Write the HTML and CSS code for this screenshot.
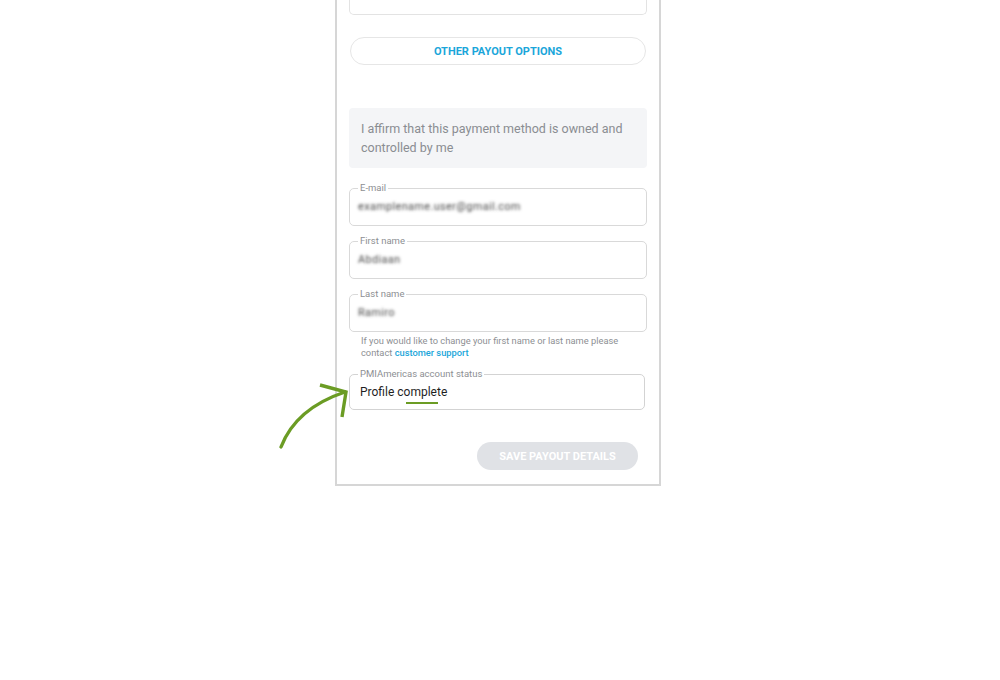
FILE: index.html
```html
<!DOCTYPE html>
<html lang="en">
<head>
    <meta charset="UTF-8">
    <meta name="viewport" content="width=device-width, initial-scale=1.0">
    <title>Payout Details</title>
    <link rel="stylesheet" href="styles.css">
</head>
<body>
    <div class="page">
        <div class="card">
            <div class="field-cut"></div>

            <button class="btn-outline">OTHER PAYOUT OPTIONS</button>

            <div class="affirm">I affirm that this payment method is owned and controlled by me</div>

            <fieldset class="field">
                <legend>E-mail</legend>
                <div class="value blurred">examplename.user@gmail.com</div>
            </fieldset>

            <fieldset class="field">
                <legend>First name</legend>
                <div class="value blurred">Abdiaan</div>
            </fieldset>

            <fieldset class="field">
                <legend>Last name</legend>
                <div class="value blurred">Ramiro</div>
            </fieldset>

            <p class="helper">If you would like to change your first name or last name please contact <a href="#">customer support</a></p>

            <fieldset class="field status">
                <legend>PMIAmericas account status</legend>
                <div class="value">Profile <span class="mark">complete</span></div>
            </fieldset>

            <div class="actions">
                <button class="btn-save" disabled>SAVE PAYOUT DETAILS</button>
            </div>

            <!-- annotation arrow -->
            <svg class="arrow" width="80" height="70" viewBox="275 382 80 70">
                <path d="M279,447 C289,421 310,403 343,392" fill="none" stroke="#6b9c24" stroke-width="3.4" stroke-linecap="round"/>
                <path d="M318,385 L344,392 L340,417" fill="none" stroke="#6b9c24" stroke-width="3.4" stroke-linejoin="miter"/>
            </svg>
        </div>
    </div>
</body>
</html>
```

FILE: styles.css
```css
body {
    margin: 0;
    background: #fff;
    font-family: Roboto, "Liberation Sans", Arial, sans-serif;
}
.page {
    width: 1000px;
    height: 680px;
    padding-left: 335px;
    box-sizing: border-box;
}
.card {
    position: relative;
    width: 326px;
    box-sizing: border-box;
    border: 2px solid #d6d6d6;
    border-top: none;
    padding: 0 12px 14px;
}
.field-cut {
    height: 14px;
    border: 1px solid #e3e3e3;
    border-top: none;
    border-radius: 0 0 5px 5px;
}
.btn-outline {
    display: block;
    width: 296px;
    height: 28px;
    margin: 22px 0 0 1px;
    background: #fff;
    border: 1.5px solid #e6e6e6;
    border-radius: 14px;
    color: #1ba6da;
    font-family: inherit;
    font-size: 11px;
    font-weight: 700;
    cursor: pointer;
}
.affirm {
    margin-top: 43px;
    background: #f4f5f7;
    border-radius: 4px;
    padding: 11px 12px 11px;
    color: #8a8d92;
    font-size: 12.5px;
    line-height: 19px;
}
.field {
    margin: 15px 0 0;
    padding: 0 10px 8px;
    border: 1.5px solid #d9d9d9;
    border-radius: 5px;
    min-width: 0;
}
.field + .field {
    margin-top: 10px;
}
.field legend {
    margin-left: -2px;
    padding: 0 2px;
    font-size: 9.5px;
    line-height: 10px;
    color: #8d8f93;
}
.value {
    height: 20px;
    line-height: 20px;
    padding-top: 4px;
    font-size: 12px;
    color: #222;
}
.blurred {
    color: transparent;
    text-shadow: 0 0 3px #4a4a4a;
    font-size: 11px;
    letter-spacing: 0.3px;
    margin-left: -2px;
}
.helper {
    margin: 3px 0 0 12px;
    font-size: 9.3px;
    line-height: 12px;
    color: #8d8f93;
}
.helper a {
    color: #1ba6da;
    text-decoration: none;
    font-weight: 500;
}
.field.status {
    margin: 10px 2px 0 0;
    padding-bottom: 7px;
    border-color: #d3d3d3;
}
.status .value {
    padding-top: 3px;
    color: #1f1f1f;
}
.mark {
    position: relative;
}
.mark::after {
    content: "";
    position: absolute;
    left: 9px;
    width: 32px;
    bottom: -5px;
    height: 2px;
    background: #6b9c24;
}
.actions {
    display: flex;
    justify-content: flex-end;
    margin-top: 32px;
    padding-right: 9px;
}
.btn-save {
    width: 161px;
    height: 28px;
    border: none;
    border-radius: 14px;
    background: #e0e2e6;
    color: #fff;
    font-family: inherit;
    font-size: 11px;
    font-weight: 700;
}
.arrow {
    position: absolute;
    left: -60px;
    top: 382px;
    overflow: visible;
}
```
